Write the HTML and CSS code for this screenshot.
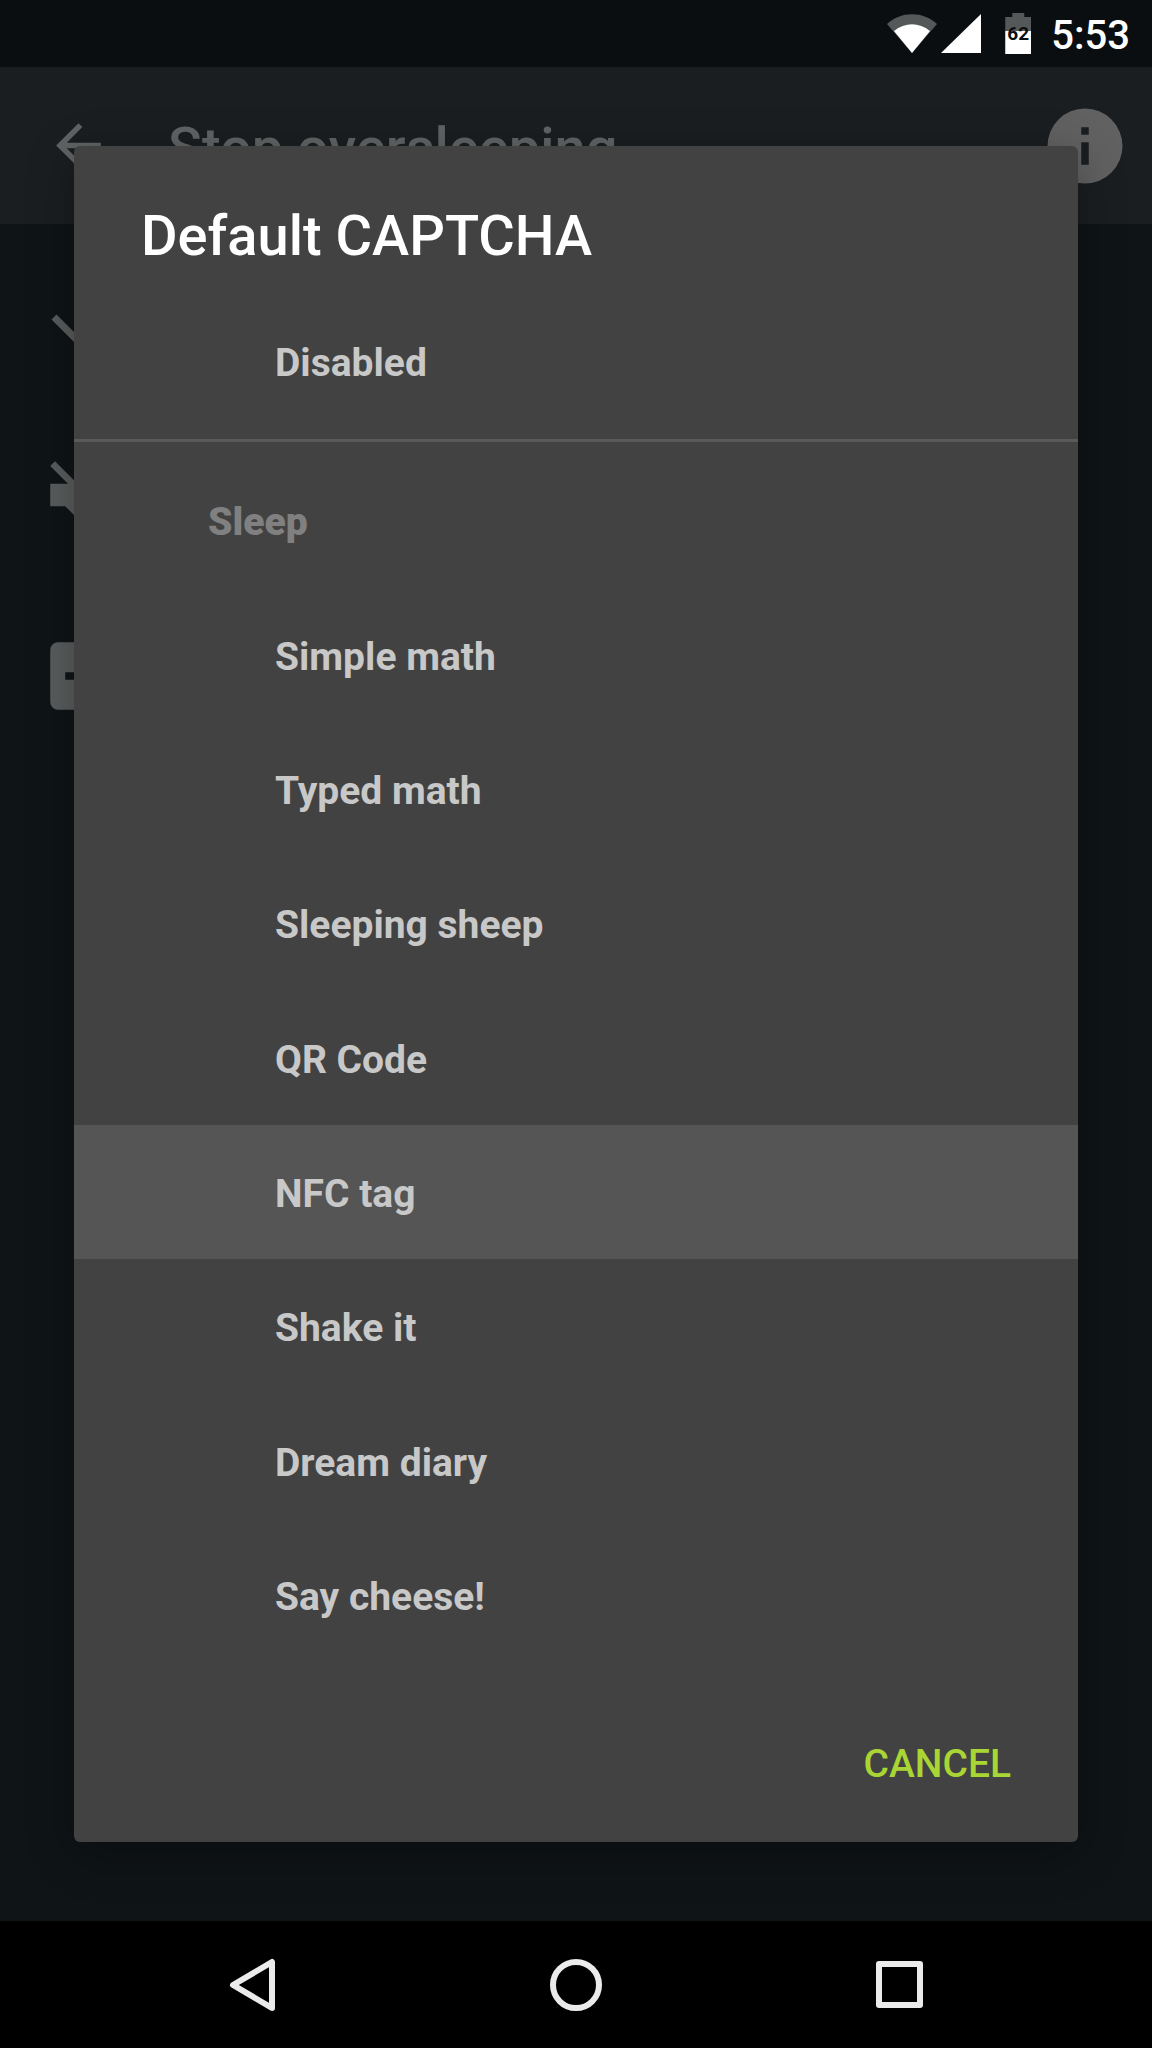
FILE: index.html
```html
<!DOCTYPE html>
<html lang="en">
<head>
    <meta charset="UTF-8">
    <meta name="viewport" content="width=device-width, initial-scale=1.0">
    <title>Stop oversleeping</title>
    <link rel="stylesheet" href="styles.css">
</head>
<body>
    <div class="phone">
        <header class="status-bar">
            <svg class="wifi" viewBox="0 0 50 40" aria-hidden="true">
                <path fill="#555859" d="M0 10C14-3 36-3 50 10L25 39z"/>
                <path fill="#fff" d="M7 17C18 8 32 8 43 17L25 39z"/>
            </svg>
            <svg class="signal" viewBox="0 0 40 40" aria-hidden="true">
                <path fill="#fff" d="M40 0v39H0z"/>
            </svg>
            <div class="battery">62</div>
            <time class="clock">5:53</time>
        </header>

        <main class="screen">
            <div class="app-bar">
                <button class="icon-btn back" aria-label="Back">
                    <svg viewBox="0 0 24 24"><path d="M20 11H7.8l5.6-5.6L12 4l-8 8 8 8 1.4-1.4L7.8 13H20z"/></svg>
                </button>
                <h1>Stop oversleeping</h1>
                <button class="icon-btn info" aria-label="Info">
                    <svg viewBox="0 0 24 24"><path d="M12 2a10 10 0 1 0 0 20 10 10 0 0 0 0-20zm1 15h-2v-6h2zm0-8h-2V7h2z"/></svg>
                </button>
            </div>

            <div class="settings">
                <svg viewBox="0 0 90 90"><path fill="none" stroke="currentColor" stroke-width="7" d="M15 48l30 30 30-30"/></svg>
                <svg viewBox="0 0 24 24"><path d="M16.5 12c0-1.77-1.02-3.29-2.5-4.03v2.21l2.45 2.45c.03-.2.05-.41.05-.63zM4.27 3L3 4.27 7.73 9H3v6h4l5 5v-6.73l4.25 4.25c-.67.52-1.42.93-2.25 1.18v2.06c1.38-.31 2.63-.95 3.69-1.81L19.73 21 21 19.73l-9-9zM12 4L9.91 6.09 12 8.18z"/></svg>
                <svg viewBox="0 0 24 24"><path d="M19 3H5a2 2 0 0 0-2 2v14a2 2 0 0 0 2 2h14a2 2 0 0 0 2-2V5a2 2 0 0 0-2-2zm-2 10H7v-2h10z"/></svg>
            </div>

            <!-- Dialog lies over the dimmed settings screen -->
            <div class="overlay">
                <section class="dialog" role="dialog" aria-labelledby="dialog-title">
                    <h2 id="dialog-title">Default CAPTCHA</h2>
                    <div class="options">
                        <button class="option">Disabled</button>
                        <hr>
                        <h3>Sleep</h3>
                        <button class="option">Simple math</button>
                        <button class="option">Typed math</button>
                        <button class="option">Sleeping sheep</button>
                        <button class="option">QR Code</button>
                        <button class="option pressed">NFC tag</button>
                        <button class="option">Shake it</button>
                        <button class="option">Dream diary</button>
                        <button class="option">Say cheese!</button>
                    </div>
                    <div class="actions">
                        <button class="cancel-btn">CANCEL</button>
                    </div>
                </section>
            </div>
        </main>

        <nav class="nav-bar">
            <button aria-label="Back">
                <svg viewBox="0 0 54 54"><path d="M46 4v46L7 27z"/></svg>
            </button>
            <button aria-label="Home">
                <svg viewBox="0 0 54 54"><circle cx="27" cy="27" r="23"/></svg>
            </button>
            <button aria-label="Recent apps">
                <svg viewBox="0 0 54 54"><rect x="7" y="6" width="41" height="41"/></svg>
            </button>
        </nav>
    </div>
</body>
</html>
```

FILE: styles.css
```css
/* Basic Reset */
* {
    margin: 0;
    padding: 0;
    box-sizing: border-box;
}

body {
    font-family: Roboto, "Noto Sans", sans-serif;
    background: #000;
    color: #fff;
}

button {
    font: inherit;
    color: inherit;
    background: none;
    border: none;
    cursor: pointer;
}

svg {
    display: block;
    fill: currentColor;
}

.phone {
    display: flex;
    flex-direction: column;
    min-height: 100vh;
}

/* Status bar */
.status-bar {
    display: flex;
    justify-content: flex-end;
    align-items: center;
    height: 67px;
    padding-right: 22px;
    background: #0a0e10;
}

.wifi {
    width: 50px;
    height: 40px;
}

.signal {
    width: 40px;
    height: 40px;
    margin-left: 4px;
}

.battery {
    width: 26px;
    height: 41px;
    margin: 0 20px 0 24px;
    padding-top: 10px;
    background: linear-gradient(#555859 18px, #fff 18px);
    clip-path: polygon(0 4px, 7px 4px, 7px 0, 19px 0, 19px 4px, 100% 4px, 100% 100%, 0 100%);
    color: #0a0e10;
    font-size: 19px;
    font-weight: bold;
    line-height: 22px;
    text-align: center;
}

.clock {
    padding-top: 4px;
    font-size: 40px;
    font-weight: 500;
    line-height: 48px;
}

/* Settings screen */
.screen {
    position: relative;
    flex: 1;
    background: #0f1417;
}

.app-bar {
    display: flex;
    align-items: center;
    height: 157px;
    padding: 0 22px 0 45px;
    background: #1a1e20;
    color: #606364;
}

.app-bar h1 {
    flex: 1;
    margin-left: 56px;
    padding-top: 4px;
    font-size: 56px;
    font-weight: 500;
    line-height: 64px;
}

.back svg {
    width: 67px;
    height: 67px;
}

.info {
    color: #616161;
}

.info svg {
    width: 90px;
    height: 90px;
}

.settings {
    display: flex;
    flex-direction: column;
    gap: 91px;
    padding: 45px 39px;
    color: #5a5d5d;
}

.settings svg {
    width: 90px;
    height: 90px;
}

/* Dialog */
.overlay {
    position: absolute;
    inset: 0;
    display: flex;
    padding: 79px 74px;
}

.dialog {
    flex: 1;
    display: flex;
    flex-direction: column;
    background: #424242;
    border-radius: 6px;
    box-shadow: 0 12px 48px rgba(0, 0, 0, 0.3);
}

.dialog h2 {
    height: 148px;
    padding: 57px 67px 0;
    font-size: 56px;
    font-weight: 500;
    line-height: 66px;
}

.options {
    flex: 1;
    display: flex;
    flex-direction: column;
    font-size: 39px;
    font-weight: bold;
    line-height: 46px;
}

.option,
.options h3 {
    flex: 1;
    display: flex;
    align-items: center;
    text-align: left;
}

.option {
    padding: 4px 201px 0;
    color: #c8c8c8;
}

.option.pressed {
    background: #555;
}

.options h3 {
    padding: 4px 134px 0;
    color: #808080;
    font-size: inherit;
    font-weight: 900;
}

.options hr {
    height: 3px;
    margin: 11px 0;
    border: none;
    background: #5a5a5a;
}

.actions {
    display: flex;
    justify-content: flex-end;
    align-items: flex-end;
    height: 180px;
    padding: 22px 45px;
}

.cancel-btn {
    height: 112px;
    padding: 0 22px;
    color: #a9d634;
    font-size: 39px;
    font-weight: 500;
    line-height: 46px;
}

/* Navigation bar */
.nav-bar {
    display: flex;
    justify-content: center;
    height: 127px;
    background: #000;
    color: #ebebeb;
}

.nav-bar button {
    width: 28%;
    display: flex;
    justify-content: center;
    align-items: center;
}

.nav-bar svg {
    width: 54px;
    height: 54px;
    fill: none;
    stroke: currentColor;
    stroke-width: 6;
    stroke-linejoin: round;
}
```
